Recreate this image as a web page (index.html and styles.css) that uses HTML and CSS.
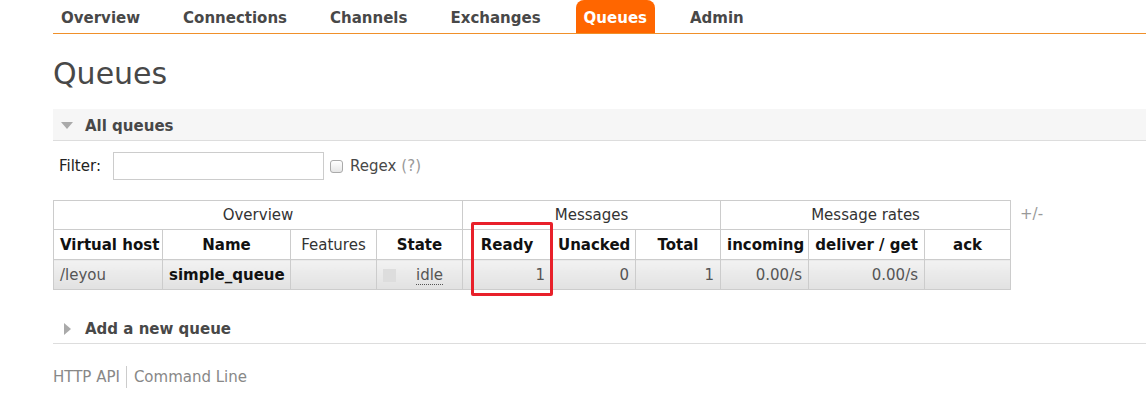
FILE: index.html
```html
<!DOCTYPE html>
<html lang="en">
<head>
    <meta charset="UTF-8">
    <meta name="viewport" content="width=device-width, initial-scale=1.0">
    <title>RabbitMQ Management - Queues</title>
    <link rel="stylesheet" href="styles.css">
</head>
<body>
    <div id="menu">
        <ul>
            <li><a href="#">Overview</a></li>
            <li><a href="#">Connections</a></li>
            <li><a href="#">Channels</a></li>
            <li><a href="#">Exchanges</a></li>
            <li><a href="#" class="selected">Queues</a></li>
            <li><a href="#">Admin</a></li>
        </ul>
    </div>

    <div id="main">
        <h1>Queues</h1>

        <div class="section">
            <h2><span class="arrow down"></span>All queues</h2>
            <div class="hider">
                <div class="filter">
                    <label for="filter">Filter:</label>
                    <input type="text" id="filter">
                    <label class="regex"><span class="checkbox"></span>Regex <span class="help">(?)</span></label>
                </div>

                <div class="table-wrap">
                    <table class="list">
                        <colgroup>
                            <col style="width: 109px">
                            <col style="width: 128px">
                            <col style="width: 86px">
                            <col style="width: 86px">
                            <col style="width: 89px">
                            <col style="width: 84px">
                            <col style="width: 85px">
                            <col style="width: 88px">
                            <col style="width: 116px">
                            <col style="width: 86px">
                        </colgroup>
                        <thead>
                            <tr class="group">
                                <th colspan="4" class="plain">Overview</th>
                                <th colspan="3" class="plain">Messages</th>
                                <th colspan="3" class="plain">Message rates</th>
                            </tr>
                            <tr>
                                <th>Virtual host</th>
                                <th>Name</th>
                                <th class="plain">Features</th>
                                <th>State</th>
                                <th>Ready</th>
                                <th>Unacked</th>
                                <th>Total</th>
                                <th>incoming</th>
                                <th>deliver / get</th>
                                <th>ack</th>
                            </tr>
                        </thead>
                        <tbody>
                            <tr class="alt1">
                                <td class="vhost">/leyou</td>
                                <td class="name">simple_queue</td>
                                <td></td>
                                <td class="state"><span class="status-grey"></span><abbr>idle</abbr></td>
                                <td class="r">1</td>
                                <td class="r">0</td>
                                <td class="r">1</td>
                                <td class="r">0.00/s</td>
                                <td class="r">0.00/s</td>
                                <td></td>
                            </tr>
                        </tbody>
                    </table>
                    <span class="plus-minus">+/-</span>
                    <div class="highlight"></div>
                </div>
            </div>
        </div>

        <div class="section collapsed">
            <h2><span class="arrow right"></span>Add a new queue</h2>
        </div>

        <div id="footer">
            <a href="#">HTTP API</a>
            <a href="#">Command Line</a>
        </div>
    </div>
</body>
</html>
```

FILE: styles.css
```css
body {
    margin: 0;
    font-family: "DejaVu Sans", Verdana, sans-serif;
    font-size: 15px;
    color: #484848;
    background: #fff;
}
a {
    text-decoration: none;
    color: inherit;
}
#menu {
    padding-left: 53px;
}
#menu ul {
    list-style: none;
    margin: 0;
    padding: 0;
    display: flex;
    height: 33px;
    border-bottom: 1px solid #f0902a;
}
#menu li {
    margin-right: 27px;
}
#menu li a {
    display: block;
    height: 33px;
    box-sizing: border-box;
    padding: 3px 8px 0 8px;
    line-height: 30px;
    font-weight: bold;
    color: #484848;
    border-radius: 8px 8px 0 0;
}
#menu li a.selected {
    background-color: #ff6600;
    color: #fff;
}
#main {
    padding-left: 53px;
}
h1 {
    font-size: 30px;
    font-weight: normal;
    line-height: 36px;
    margin: 22px 0 17px 0;
}
.section h2 {
    display: flex;
    align-items: center;
    margin: 0;
    height: 32px;
    box-sizing: border-box;
    padding-top: 2px;
    font-size: 15px;
    font-weight: bold;
    color: #484848;
    background-color: #f6f6f6;
    border-bottom: 1px solid #ddd;
}
.section.collapsed h2 {
    background: none;
    margin-top: 22px;
}
.arrow {
    display: inline-block;
    width: 0;
    height: 0;
    margin-right: 12px;
}
.arrow.down {
    margin-left: 8px;
    border-left: 6px solid transparent;
    border-right: 6px solid transparent;
    border-top: 7px solid #aaa;
}
.arrow.right {
    margin-left: 11px;
    margin-right: 14px;
    border-top: 6px solid transparent;
    border-bottom: 6px solid transparent;
    border-left: 7px solid #aaa;
}
.filter {
    display: flex;
    align-items: center;
    margin: 11px 0 20px 0;
    padding-left: 6px;
    color: #222;
}
.filter label[for="filter"] {
    width: 54px;
}
.filter input {
    width: 211px;
    height: 28px;
    box-sizing: border-box;
    margin: 0 6px 0 0;
    border: 1px solid #ccc;
    font-family: inherit;
    font-size: 15px;
}
.regex {
    display: flex;
    align-items: center;
    color: #484848;
}
.checkbox {
    display: inline-block;
    width: 11px;
    height: 11px;
    border: 1px solid #aaa;
    border-radius: 3px;
    background: linear-gradient(#fff, #e6e6e6);
    margin-right: 7px;
}
.help {
    color: #999;
    margin-left: 5px;
}
.table-wrap {
    position: relative;
    display: flex;
    align-items: flex-start;
}
table.list {
    border-collapse: collapse;
    table-layout: fixed;
    width: 958px;
}
table.list th,
table.list td {
    border: 1px solid #ccc;
    height: 29px;
    padding: 0 6px;
    white-space: nowrap;
    overflow: hidden;
}
table.list tr.group th {
    height: 28px;
}
table.list th {
    font-weight: bold;
    color: #111;
    text-align: center;
}
table.list th.plain {
    font-weight: normal;
    color: #333;
}
tr.alt1 td {
    background: linear-gradient(#f2f2f2, #e1e1e1);
    color: #555;
}
table.list td.r {
    text-align: right;
}
table.list td.name {
    font-weight: bold;
    color: #111;
}
td.state {
    color: #555;
}
.status-grey {
    display: inline-block;
    width: 13px;
    height: 13px;
    background: #ddd;
    vertical-align: middle;
    margin-right: 20px;
}
abbr {
    text-decoration: none;
    border-bottom: 1px dotted #555;
}
.plus-minus {
    color: #999;
    margin: 5px 0 0 9px;
}
.highlight {
    position: absolute;
    left: 418px;
    top: 22px;
    width: 76px;
    height: 68px;
    border: 3px solid #e8202a;
    border-radius: 2px;
}
#footer {
    display: flex;
    align-items: center;
    margin-top: 22px;
}
#footer a {
    color: #888;
    line-height: 22px;
}
#footer a + a {
    border-left: 1px solid #ccc;
    margin-left: 6px;
    padding-left: 7px;
}
```
